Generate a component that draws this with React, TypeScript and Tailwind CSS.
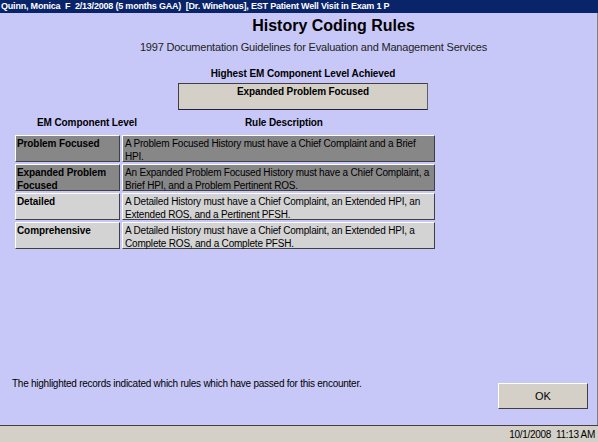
const rows = [
  {
    level: "Problem Focused",
    rule: "A Problem Focused History must have a Chief Complaint and a Brief HPI.",
    passed: true,
  },
  {
    level: "Expanded Problem Focused",
    rule: "An Expanded Problem Focused History must have a Chief Complaint, a Brief HPI, and a Problem Pertinent ROS.",
    passed: true,
  },
  {
    level: "Detailed",
    rule: "A Detailed History must have a Chief Complaint, an Extended HPI, an Extended ROS, and a Pertinent PFSH.",
    passed: false,
  },
  {
    level: "Comprehensive",
    rule: "A Detailed History must have a Chief Complaint, an Extended HPI, a Complete ROS, and a Complete PFSH.",
    passed: false,
  },
];

const raised = "border border-t-white border-l-white border-b-[#404040] border-r-[#404040]";

export default function App() {
  return (
    <div className="w-[598px] h-[442px] flex flex-col bg-[#c8c8f8] overflow-hidden font-['Liberation_Sans',Arial,sans-serif] text-[10px] text-black">
      {/* barra de titulo */}
      <div className="h-[13px] bg-[#0a246a] text-white font-bold text-[9px] tracking-[-0.2px] leading-[13px] pl-[1px] whitespace-nowrap overflow-hidden">
        Quinn, Monica&nbsp; F&nbsp; 2/13/2008 (5 months GAA)&nbsp; [Dr. Winehous], EST Patient Well Visit in Exam 1 P
      </div>

      <div className="flex-1 flex flex-col border-r border-[#808080]">
        <h1 className="pl-[70px] text-center mt-[3px] text-[16px] font-bold leading-[20px]">History Coding Rules</h1>
        <p className="pl-[30px] text-center mt-[4px] text-[11px] tracking-[-0.2px] leading-[15px] text-[#222]">
          1997 Documentation Guidelines for Evaluation and Management Services
        </p>

        <div className="mt-[12px] w-[250px] ml-[178px] flex flex-col items-center">
          <div className="font-bold leading-[13px] tracking-[-0.1px]">Highest EM Component Level Achieved</div>
          <div className="mt-[3px] w-[250px] h-[27px] bg-[#d4d0c8] border border-t-[#404040] border-l-[#404040] border-b-[#202040] border-r-[#606060] text-center font-bold tracking-[-0.1px] leading-[14px] pt-[1px]">
            Expanded Problem Focused
          </div>
        </div>

        <div className="mt-[6px] ml-[15px] w-[420px]">
          <div className="flex font-bold leading-[13px] mb-[6px] tracking-[-0.1px] whitespace-nowrap">
            <div className="w-[107px] pl-[22px]">EM Component Level</div>
            <div className="pl-[123px]">Rule Description</div>
          </div>
          <div className="flex flex-col gap-[2px]">
            {rows.map((r) => (
              <div key={r.level} className="flex gap-[2px] h-[27px]">
                <div
                  className={`w-[105px] ${raised} px-[1px] pt-[1px] font-bold leading-[13px] tracking-[-0.1px] ${
                    r.passed ? "bg-[#878787]" : "bg-[#d3d3d3]"
                  }`}
                >
                  {r.level}
                </div>
                <div
                  className={`flex-1 ${raised} px-[2px] pt-[1px] leading-[13px] tracking-[-0.2px] ${
                    r.passed ? "bg-[#878787]" : "bg-[#d3d3d3]"
                  }`}
                >
                  {r.rule}
                </div>
              </div>
            ))}
          </div>
        </div>

        <div className="flex-1" />

        <div className="flex items-end justify-between pl-[12px] pr-[9px] pb-[16px]">
          <div className="pb-[19px] leading-[13px] tracking-[-0.25px]">
            The highlighted records indicated which rules which have passed for this encounter.
          </div>
          <button className={`w-[90px] h-[26px] bg-[#d4d0c8] ${raised} text-[11px]`}>OK</button>
        </div>
      </div>

      {/* barra de estado */}
      <div className="h-[17px] border-t border-[#404040] bg-[#d4d0c8] flex justify-end items-center pr-[3px]">
        <div className="tracking-[-0.3px]">10/1/2008&nbsp; 11:13 AM</div>
      </div>
    </div>
  );
}
